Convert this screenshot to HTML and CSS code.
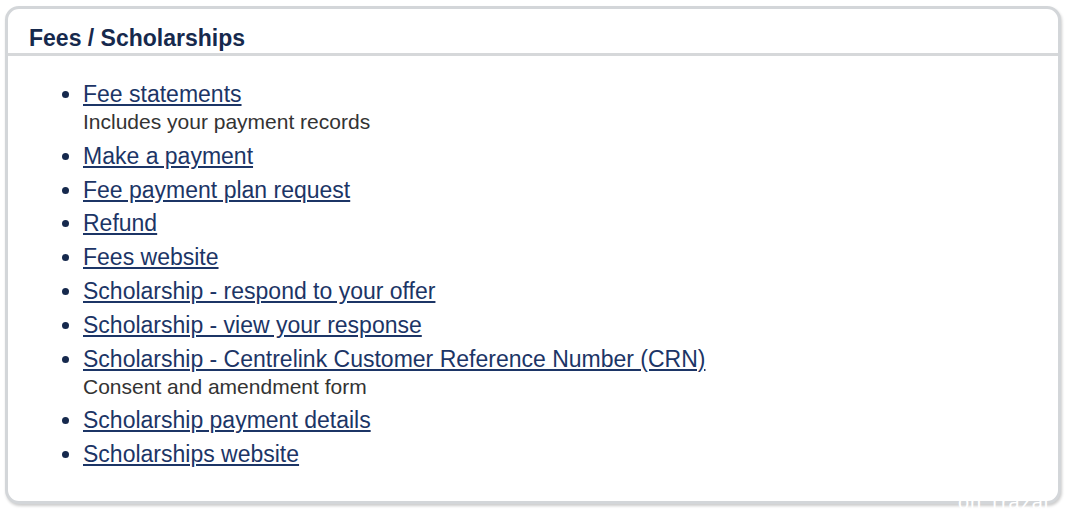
FILE: index.html
```html
<!DOCTYPE html>
<html lang="en">
<head>
    <meta charset="UTF-8">
    <meta name="viewport" content="width=device-width, initial-scale=1.0">
    <title>Fees / Scholarships</title>
    <link rel="stylesheet" href="styles.css">
</head>
<body>
    <div class="panel">
        <h2 class="panel-title">Fees / Scholarships</h2>
        <ul class="links">
            <li>
                <a href="#">Fee statements</a>
                <span class="note">Includes your payment records</span>
            </li>
            <li><a href="#">Make a payment</a></li>
            <li><a href="#">Fee payment plan request</a></li>
            <li><a href="#">Refund</a></li>
            <li><a href="#">Fees website</a></li>
            <li><a href="#">Scholarship - respond to your offer</a></li>
            <li><a href="#">Scholarship - view your response</a></li>
            <li>
                <a href="#">Scholarship - Centrelink Customer Reference Number (CRN)</a>
                <span class="note">Consent and amendment form</span>
            </li>
            <li><a href="#">Scholarship payment details</a></li>
            <li><a href="#">Scholarships website</a></li>
        </ul>
    </div>
    <span class="watermark">on Trazal</span>
</body>
</html>
```

FILE: styles.css
```css
body {
    font-family: 'Liberation Sans', Arial, sans-serif;
    background-color: #ffffff;
    margin: 0;
    padding: 0;
    overflow: hidden;
    height: 512px;
    position: relative;
}
.panel {
    margin: 6px 7px 0 5px;
    height: 498px;
    box-sizing: border-box;
    border: 3px solid #d3d6d9;
    border-radius: 14px;
    box-shadow: 1px 2px 3px rgba(0, 0, 0, 0.2);
    background-color: #fff;
}
.panel-title {
    margin: 0;
    padding: 16px 0 2px 21px;
    font-size: 23px;
    line-height: 26px;
    font-weight: bold;
    color: #16294d;
    border-bottom: 3px solid #d6d8da;
}
.links {
    margin: 24px 0 0 0;
    padding-left: 75px;
    display: flex;
    flex-direction: column;
    gap: 5.8px;
    color: #16294d;
}
.links li {
    font-size: 23px;
    line-height: 28px;
}
.links a {
    color: #1c3566;
    text-decoration: underline;
    text-underline-offset: 2px;
}
.note {
    display: block;
    font-size: 21px;
    line-height: 28px;
    color: #333;
}
.watermark {
    position: absolute;
    left: 958px;
    top: 492px;
    font-size: 20px;
    line-height: 20px;
    color: #fff;
    letter-spacing: 1px;
}
```
